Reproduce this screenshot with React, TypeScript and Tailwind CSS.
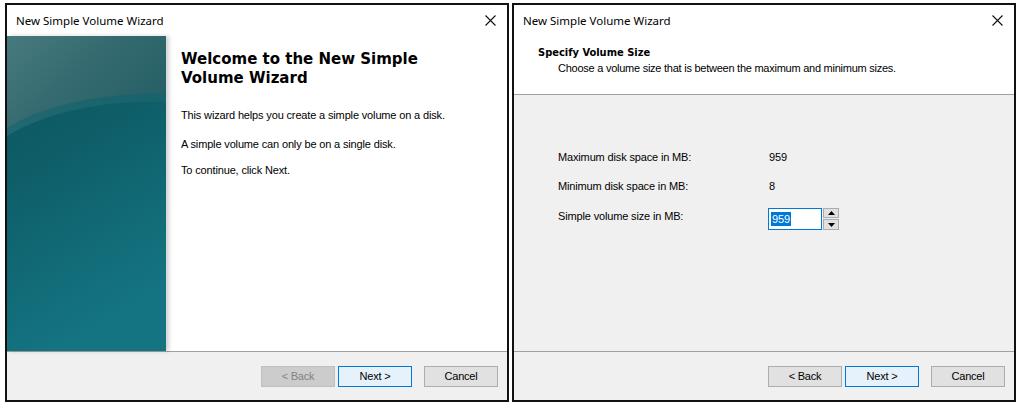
import React from "react";

const ui = { fontFamily: '"Liberation Sans", Arial, sans-serif' };
const seg = { fontFamily: '"Noto Sans", "Open Sans", sans-serif' };
const verd = { fontFamily: '"DejaVu Sans", Verdana, sans-serif' };

function CloseX() {
  return (
    <svg width="11" height="11" viewBox="0 0 11 11">
      <path d="M0.5 0.5 L10.5 10.5 M10.5 0.5 L0.5 10.5" stroke="#111" strokeWidth="1.1" />
    </svg>
  );
}

function TitleBar() {
  return (
    <div className="h-[31px] bg-white flex items-center justify-between pl-[9px] pr-[11px] shrink-0">
      <span className="text-[11.5px] text-black" style={seg}>New Simple Volume Wizard</span>
      <CloseX />
    </div>
  );
}

function Btn({ label, disabled, primary }: { label: string; disabled?: boolean; primary?: boolean }) {
  return (
    <div
      className={
        "w-[74px] h-[21px] flex items-center justify-center text-[11px] tracking-[-0.2px] border " +
        (disabled
          ? "bg-[#cccccc] border-[#bfbfbf] text-[#838383]"
          : primary
          ? "bg-[#e5f1fb] border-[#0078d7] text-black"
          : "bg-[#e1e1e1] border-[#adadad] text-black")
      }
      style={ui}
    >
      {label}
    </div>
  );
}

function Footer({ backDisabled }: { backDisabled?: boolean }) {
  return (
    <div className="flex-1 bg-[#f0f0f0] border-t border-[#a0a0a0] flex justify-end items-start pt-[14px] pr-[9px]">
      <Btn label="< Back" disabled={backDisabled} />
      <div className="w-[3px]" />
      <Btn label="Next >" primary />
      <div className="w-[12px]" />
      <Btn label="Cancel" />
    </div>
  );
}

function SideArt() {
  return (
    <svg width="159" height="315" viewBox="0 0 159 315" className="block">
      <defs>
        <linearGradient id="top" x1="0" y1="0" x2="1" y2="0.6">
          <stop offset="0" stopColor="#477a7e" />
          <stop offset="0.5" stopColor="#356b70" />
          <stop offset="1" stopColor="#266066" />
        </linearGradient>
        <linearGradient id="body" x1="0" y1="0" x2="0.3" y2="1">
          <stop offset="0" stopColor="#0b545d" />
          <stop offset="0.4" stopColor="#0e5d67" />
          <stop offset="1" stopColor="#147482" />
        </linearGradient>
        <linearGradient id="band" x1="0" y1="0" x2="1" y2="0">
          <stop offset="0" stopColor="#578a8f" stopOpacity="0.3" />
          <stop offset="1" stopColor="#4f8489" stopOpacity="0.12" />
        </linearGradient>
      </defs>
      <rect width="159" height="315" fill="url(#body)" />
      <path d="M0 0 H159 V58 C110 56 40 66 0 92 Z" fill="url(#top)" />
      <path d="M0 92 C40 66 110 56 159 58 V66 C110 64 45 72 0 100 Z" fill="url(#band)" />
    </svg>
  );
}

function LeftWindow() {
  return (
    <div className="w-[504px] h-[399px] border-2 border-[#111] flex flex-col bg-white shrink-0">
      <TitleBar />
      <div className="h-[315px] flex shrink-0 bg-white">
        <div className="shrink-0 shadow-[3px_0_4px_rgba(0,0,0,0.18)] relative">
          <SideArt />
        </div>
        <div className="pl-[15px] pt-[14px] flex flex-col">
          <div className="text-[15px] font-bold leading-[19px] text-black" style={verd}>
            Welcome to the New Simple
            <br />
            Volume Wizard
          </div>
          <div className="text-[11px] tracking-[-0.15px] text-black mt-[21px] leading-[13px]" style={ui}>
            This wizard helps you create a simple volume on a disk.
          </div>
          <div className="text-[11px] tracking-[-0.15px] text-black mt-[16px] leading-[13px]" style={ui}>
            A simple volume can only be on a single disk.
          </div>
          <div className="text-[11px] tracking-[-0.15px] text-black mt-[13px] leading-[13px]" style={ui}>
            To continue, click Next.
          </div>
        </div>
      </div>
      <Footer backDisabled />
    </div>
  );
}

function Spinner() {
  return (
    <div className="w-[16px] h-[22px] flex flex-col gap-[1px] ml-[1px]">
      <div className="h-[10px] bg-[#e1e1e1] border border-[#adadad] flex items-center justify-center">
        <svg width="7" height="4" viewBox="0 0 7 4"><path d="M3.5 0 L7 4 H0 Z" fill="#000" /></svg>
      </div>
      <div className="h-[11px] bg-[#e1e1e1] border border-[#adadad] flex items-center justify-center">
        <svg width="7" height="4" viewBox="0 0 7 4"><path d="M0 0 H7 L3.5 4 Z" fill="#000" /></svg>
      </div>
    </div>
  );
}

function RightWindow() {
  return (
    <div className="w-[504px] h-[399px] border-2 border-[#111] flex flex-col bg-white shrink-0">
      <TitleBar />
      <div className="h-[59px] bg-white border-b border-[#a0a0a0] shrink-0 pl-[24px] pt-[10px]">
        <div className="text-[11px] font-bold leading-[14px] text-black" style={{ fontFamily: '"DejaVu Sans Condensed", "DejaVu Sans", Tahoma, sans-serif' }}>
          Specify Volume Size
        </div>
        <div className="text-[11px] tracking-[-0.25px] leading-[13px] text-black pl-[20px] mt-[2px]" style={ui}>
          Choose a volume size that is between the maximum and minimum sizes.
        </div>
      </div>
      <div className="h-[256px] bg-[#f0f0f0] shrink-0 pl-[44px] pt-[56px] text-[11px] tracking-[-0.15px] text-black" style={ui}>
        <div className="flex h-[13px] items-center">
          <span className="w-[211px]">Maximum disk space in MB:</span>
          <span>959</span>
        </div>
        <div className="flex h-[13px] items-center mt-[16px]">
          <span className="w-[211px]">Minimum disk space in MB:</span>
          <span>8</span>
        </div>
        <div className="flex mt-[15px]">
          <span className="w-[210px] pt-[2px] leading-[13px]">Simple volume size in MB:</span>
          <div className="w-[54px] h-[22px] border border-[#0078d7] bg-white flex items-center pl-[2px]">
            <span className="bg-[#0078d7] text-white leading-[14px] px-[1px]">959</span>
          </div>
          <Spinner />
        </div>
      </div>
      <Footer />
    </div>
  );
}

export default function App() {
  return (
    <div className="w-[1021px] h-[404px] bg-white flex pl-[5px] pt-[3px] gap-[3px] overflow-hidden">
      <LeftWindow />
      <RightWindow />
    </div>
  );
}
